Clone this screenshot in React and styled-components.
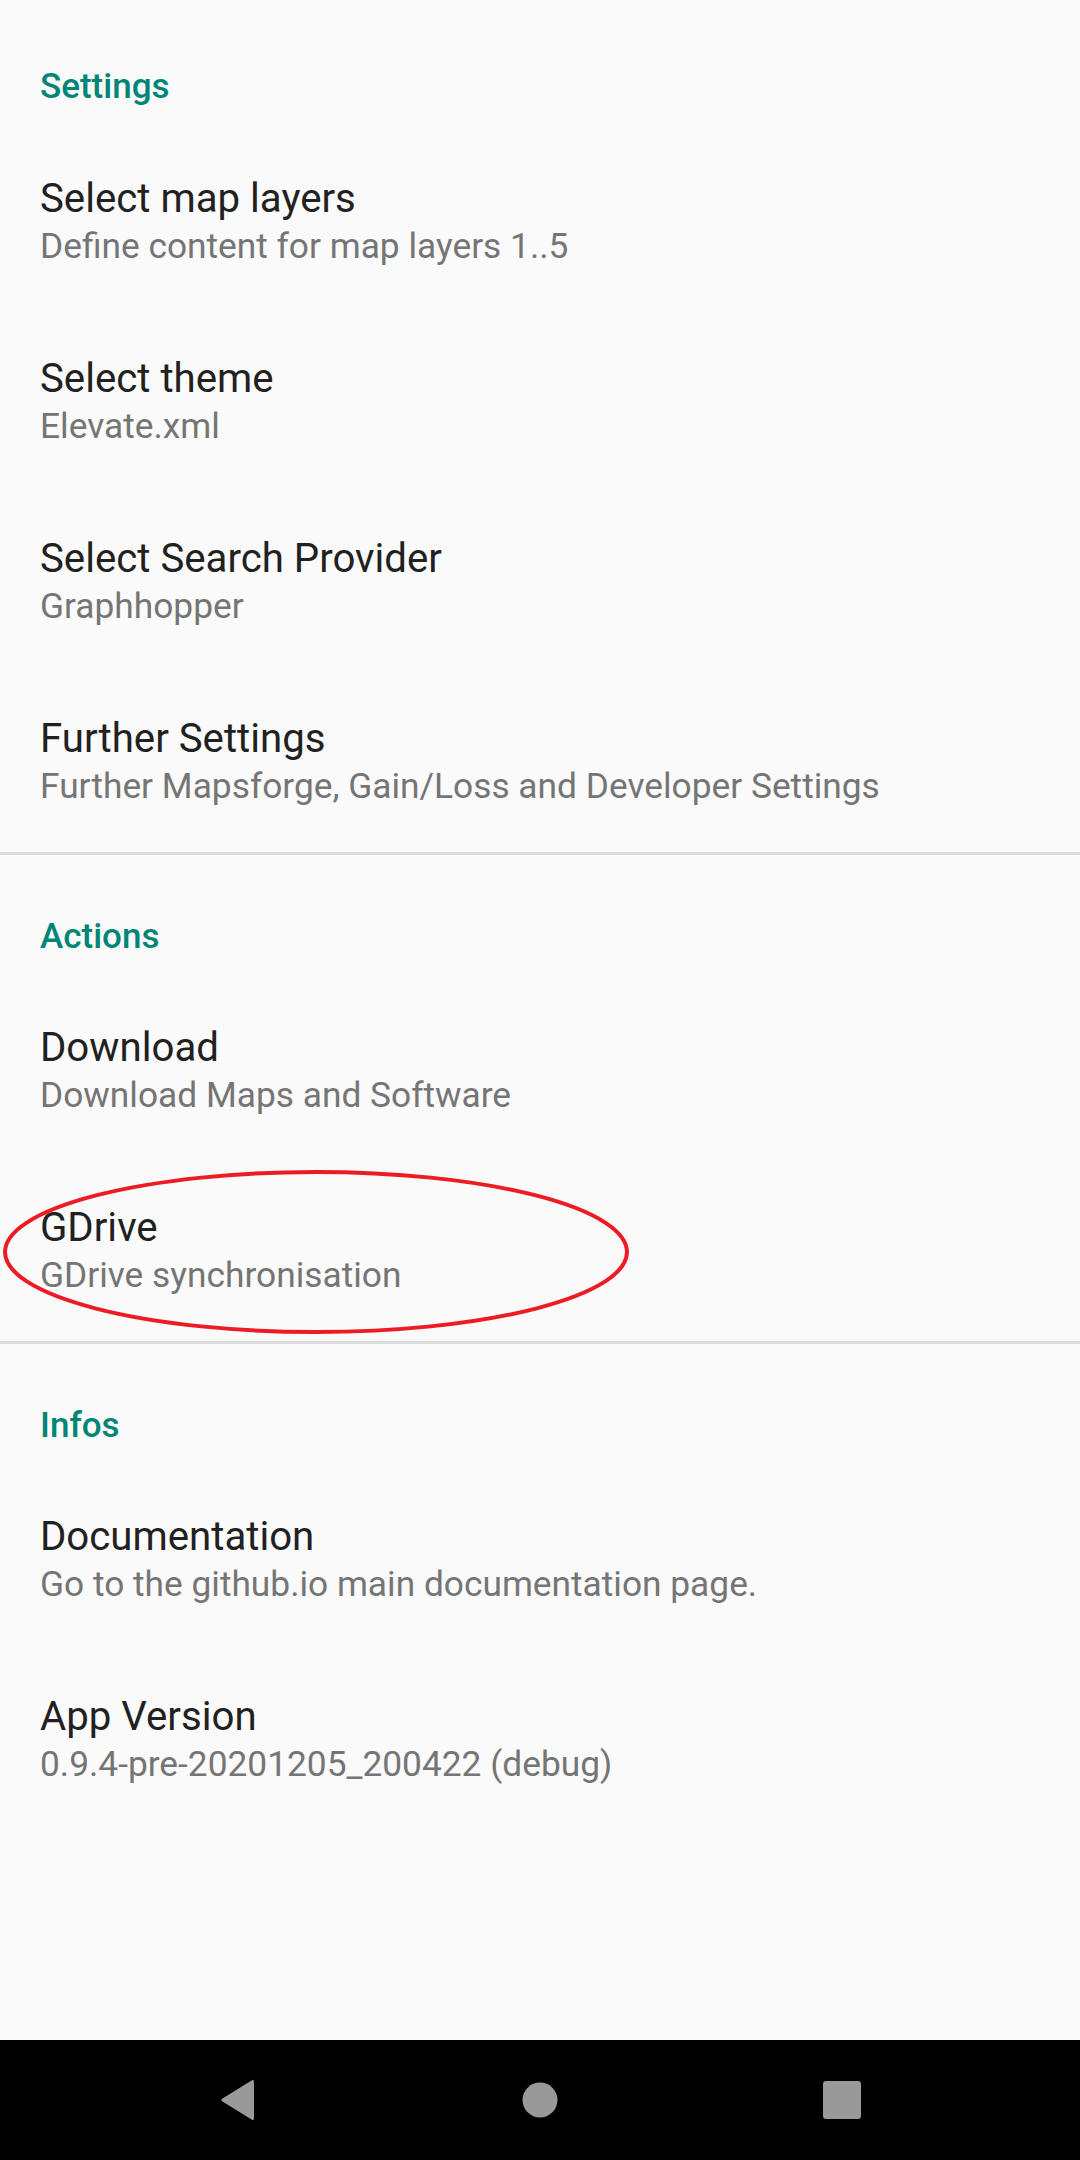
import React from "react";
import styled, { createGlobalStyle } from "styled-components";

const GlobalStyle = createGlobalStyle`
  html, body {
    margin: 0;
    padding: 0;
    background: #fafafa;
  }
  body {
    font-family: Roboto, "Noto Sans", "Liberation Sans", sans-serif;
  }
`;

const Screen = styled.div`
  position: relative;
  display: flex;
  flex-direction: column;
  width: 1080px;
  height: 2160px;
  background: #fafafa;
  overflow: hidden;
`;

const List = styled.main`
  flex: 1;
  display: flex;
  flex-direction: column;
`;

const Section = styled.section`
  display: flex;
  flex-direction: column;
  border-top: ${(p) => (p.$divider ? "3px solid #dcdcdc" : "none")};
`;

const Category = styled.h2`
  box-sizing: border-box;
  margin: 0;
  height: ${(p) => (p.$divider ? "126px" : "132px")};
  padding: ${(p) => (p.$divider ? "62px" : "67px")} 40px 0;
  font-size: 35px;
  line-height: 40px;
  font-weight: 500;
  color: #008577;
`;

const Row = styled.div`
  box-sizing: border-box;
  height: 180px;
  padding: 43px 40px 0;
  display: flex;
  flex-direction: column;
`;

const Title = styled.div`
  font-size: 40.2px;
  line-height: 48px;
  color: #212121;
`;

const Summary = styled.div`
  font-size: 35.3px;
  line-height: 47px;
  color: #757575;
`;

const Mark = styled.svg`
  position: absolute;
  left: 0;
  top: 1166px;
  pointer-events: none;
`;

const NavBar = styled.nav`
  height: 120px;
  background: #000;
  display: flex;
  align-items: center;
  justify-content: center;
  gap: 200px;
`;

const NavSlot = styled.div`
  width: 102px;
  height: 120px;
  display: flex;
  align-items: center;
  justify-content: center;
`;

const sections = [
  {
    name: "Settings",
    items: [
      ["Select map layers", "Define content for map layers 1..5"],
      ["Select theme", "Elevate.xml"],
      ["Select Search Provider", "Graphhopper"],
      ["Further Settings", "Further Mapsforge, Gain/Loss and Developer Settings"],
    ],
  },
  {
    name: "Actions",
    items: [
      ["Download", "Download Maps and Software"],
      ["GDrive", "GDrive synchronisation"],
    ],
  },
  {
    name: "Infos",
    items: [
      ["Documentation", "Go to the github.io main documentation page."],
      ["App Version", "0.9.4-pre-20201205_200422 (debug)"],
    ],
  },
];

function App() {
  return (
    <Screen>
      <GlobalStyle />
      <List>
        {sections.map((s, i) => (
          <Section key={s.name} $divider={i > 0}>
            <Category $divider={i > 0}>{s.name}</Category>
            {s.items.map(([title, summary]) => (
              <Row key={title}>
                <Title>{title}</Title>
                <Summary>{summary}</Summary>
              </Row>
            ))}
          </Section>
        ))}
      </List>

      {/* hand-drawn highlight round the GDrive entry */}
      <Mark width="640" height="180" viewBox="0 0 640 180">
        <ellipse cx="316" cy="86" rx="311" ry="80" fill="none" stroke="#ed1c24" strokeWidth="4" />
      </Mark>

      <NavBar>
        <NavSlot>
          <svg width="40" height="44" viewBox="0 0 40 44">
            <path
              d="M36 4 L36 40 Q36 43 33.5 41.5 L4.5 23.5 Q2 22 4.5 20.5 L33.5 2.5 Q36 1 36 4 Z"
              fill="#999"
            />
          </svg>
        </NavSlot>
        <NavSlot>
          <svg width="36" height="36" viewBox="0 0 36 36">
            <circle cx="18" cy="18" r="17.5" fill="#999" />
          </svg>
        </NavSlot>
        <NavSlot>
          <svg width="38" height="38" viewBox="0 0 38 38">
            <rect x="0" y="0" width="38" height="38" rx="3" fill="#999" />
          </svg>
        </NavSlot>
      </NavBar>
    </Screen>
  );
}

export default App;
